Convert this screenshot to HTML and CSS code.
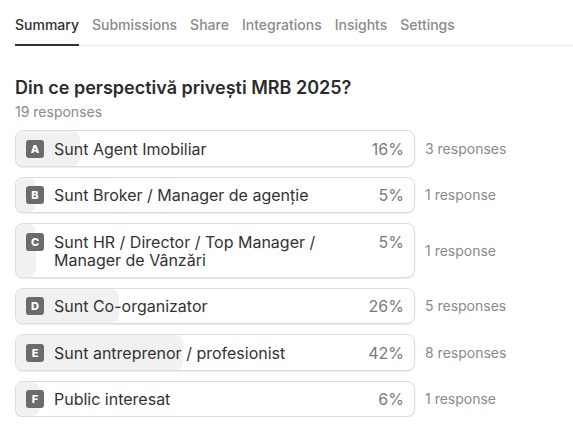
FILE: index.html
```html
<!DOCTYPE html>
<html lang="ro">
<head>
    <meta charset="UTF-8">
    <meta name="viewport" content="width=device-width, initial-scale=1.0">
    <title>Summary</title>
    <link rel="stylesheet" href="styles.css">
</head>
<body>
    <div class="page">
        <div class="tabs">
            <a class="tab active" href="#">Summary</a>
            <a class="tab" href="#">Submissions</a>
            <a class="tab" href="#">Share</a>
            <a class="tab" href="#">Integrations</a>
            <a class="tab" href="#">Insights</a>
            <a class="tab" href="#">Settings</a>
        </div>

        <div class="question">
            <h2>Din ce perspectivă privești MRB 2025?</h2>
            <div class="total">19 responses</div>

            <div class="answers">
                <div class="answer">
                    <div class="card">
                        <div class="fill" style="width: 16%"></div>
                        <span class="key">A</span>
                        <span class="label">Sunt Agent Imobiliar</span>
                        <span class="pct">16%</span>
                    </div>
                    <div class="count">3 responses</div>
                </div>
                <div class="answer">
                    <div class="card">
                        <div class="fill" style="width: 5%"></div>
                        <span class="key">B</span>
                        <span class="label">Sunt Broker / Manager de agenție</span>
                        <span class="pct">5%</span>
                    </div>
                    <div class="count">1 response</div>
                </div>
                <div class="answer">
                    <div class="card">
                        <div class="fill" style="width: 5%"></div>
                        <span class="key">C</span>
                        <span class="label">Sunt HR / Director / Top Manager /<br>Manager de Vânzări</span>
                        <span class="pct">5%</span>
                    </div>
                    <div class="count">1 response</div>
                </div>
                <div class="answer">
                    <div class="card">
                        <div class="fill" style="width: 26%"></div>
                        <span class="key">D</span>
                        <span class="label">Sunt Co-organizator</span>
                        <span class="pct">26%</span>
                    </div>
                    <div class="count">5 responses</div>
                </div>
                <div class="answer">
                    <div class="card">
                        <div class="fill" style="width: 42%"></div>
                        <span class="key">E</span>
                        <span class="label">Sunt antreprenor / profesionist</span>
                        <span class="pct">42%</span>
                    </div>
                    <div class="count">8 responses</div>
                </div>
                <div class="answer">
                    <div class="card">
                        <div class="fill" style="width: 6%"></div>
                        <span class="key">F</span>
                        <span class="label">Public interesat</span>
                        <span class="pct">6%</span>
                    </div>
                    <div class="count">1 response</div>
                </div>
            </div>
        </div>
    </div>
</body>
</html>
```

FILE: styles.css
```css
* {
    margin: 0;
    padding: 0;
    box-sizing: border-box;
    font-family: 'Inter', 'Noto Sans', sans-serif;
}

body {
    background-color: #fff;
    color: #333;
}

.page {
    padding-left: 15px;
}

.tabs {
    display: flex;
    gap: 13px;
    padding-top: 15px;
    border-bottom: 1px solid #ececec;
}

.tab {
    text-decoration: none;
    font-size: 14px;
    font-weight: 500;
    color: #8a8a8a;
    line-height: 20px;
    padding-bottom: 9px;
    border-bottom: 2px solid transparent;
    margin-bottom: -1px;
}

.tab.active {
    color: #2f2f2f;
    border-bottom-color: #333;
}

.question {
    padding-top: 30px;
}

.question h2 {
    font-size: 18px;
    font-weight: 600;
    color: #2c2c2c;
    line-height: 24px;
}

.total {
    font-size: 14px;
    color: #8a8a8a;
    line-height: 20px;
    margin-top: 2px;
}

.answers {
    display: flex;
    flex-direction: column;
    gap: 10px;
    margin-top: 8px;
}

.answer {
    display: flex;
    align-items: center;
    gap: 10px;
}

.card {
    position: relative;
    width: 400px;
    display: flex;
    align-items: flex-start;
    padding: 8.5px 10px 8px;
    border: 1px solid #dcdcdc;
    border-radius: 8px;
    box-shadow: 0 1px 1px rgba(0, 0, 0, 0.08);
    background-color: #fff;
    overflow: hidden;
}

.fill {
    position: absolute;
    left: 0;
    top: 0;
    bottom: 0;
    background-color: #f1f1f1;
    border-radius: 8px;
}

.key {
    position: relative;
    flex: none;
    width: 18px;
    height: 18px;
    border-radius: 3px;
    background-color: #6b6b6b;
    color: #fff;
    font-size: 11px;
    font-weight: 800;
    display: flex;
    align-items: center;
    justify-content: center;
}

.label {
    position: relative;
    flex: 1;
    margin-left: 10px;
    font-size: 16px;
    line-height: 18px;
    color: #333;
}

.pct {
    position: relative;
    font-size: 16px;
    line-height: 18px;
    color: #7a7a7a;
    margin-left: 10px;
}

.count {
    font-size: 14px;
    color: #8a8a8a;
}
```
